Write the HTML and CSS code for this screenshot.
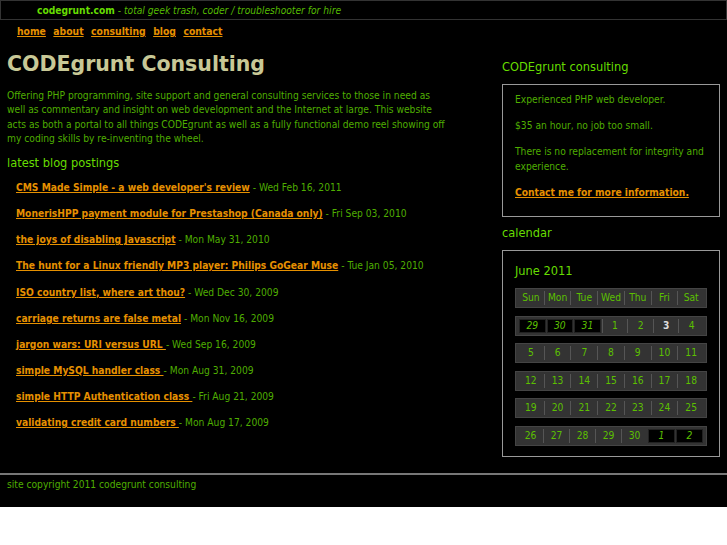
FILE: index.html
```html
<!DOCTYPE html>
<html>
<head>
<meta charset="utf-8">
<link rel="stylesheet" href="styles.css">
</head>
<body>
<div class="page">
  <div class="topbar"><span class="site">codegrunt.com</span> - <em>total geek trash, coder / troubleshooter for hire</em></div>
  <nav class="nav">
    <a href="#">home</a>
    <a href="#">about</a>
    <a href="#">consulting</a>
    <a href="#">blog</a>
    <a href="#">contact</a>
  </nav>
  <div class="main">
    <div class="content">
      <h1 class="title">CODEgrunt Consulting</h1>
      <p class="intro">Offering PHP programming, site support and general consulting services to those in need as well as commentary and insight on web development and the Internet at large. This website acts as both a portal to all things CODEgrunt as well as a fully functional demo reel showing off my coding skills by re-inventing the wheel.</p>
      <h2 class="section">latest blog postings</h2>
      <ul class="posts">
        <li><a href="#">CMS Made Simple - a web developer's review</a> - Wed Feb 16, 2011</li>
        <li><a href="#">MonerisHPP payment module for Prestashop (Canada only)</a> - Fri Sep 03, 2010</li>
        <li><a href="#">the joys of disabling Javascript</a> - Mon May 31, 2010</li>
        <li><a href="#">The hunt for a Linux friendly MP3 player: Philips GoGear Muse</a> - Tue Jan 05, 2010</li>
        <li><a href="#">ISO country list, where art thou?</a> - Wed Dec 30, 2009</li>
        <li><a href="#">carriage returns are false metal</a> - Mon Nov 16, 2009</li>
        <li><a href="#">jargon wars: URI versus URL </a> - Wed Sep 16, 2009</li>
        <li><a href="#">simple MySQL handler class </a> - Mon Aug 31, 2009</li>
        <li><a href="#">simple HTTP Authentication class </a> - Fri Aug 21, 2009</li>
        <li><a href="#">validating credit card numbers </a> - Mon Aug 17, 2009</li>
      </ul>
    </div>
    <div class="sidebar">
      <h2 class="section side-head">CODEgrunt consulting</h2>
      <div class="box info">
        <p>Experienced PHP web developer.</p>
        <p>$35 an hour, no job too small.</p>
        <p>There is no replacement for integrity and experience.</p>
        <p><a href="#">Contact me for more information.</a></p>
      </div>
      <h2 class="section side-head cal-head">calendar</h2>
      <div class="box cal">
        <div class="month">June 2011</div>
        <div class="week head"><span>Sun</span><span>Mon</span><span>Tue</span><span>Wed</span><span>Thu</span><span>Fri</span><span>Sat</span></div>
        <div class="week"><span class="other">29</span><span class="other">30</span><span class="other">31</span><span>1</span><span>2</span><span class="today">3</span><span>4</span></div>
        <div class="week"><span>5</span><span>6</span><span>7</span><span>8</span><span>9</span><span>10</span><span>11</span></div>
        <div class="week"><span>12</span><span>13</span><span>14</span><span>15</span><span>16</span><span>17</span><span>18</span></div>
        <div class="week"><span>19</span><span>20</span><span>21</span><span>22</span><span>23</span><span>24</span><span>25</span></div>
        <div class="week"><span>26</span><span>27</span><span>28</span><span>29</span><span>30</span><span class="other">1</span><span class="other">2</span></div>
      </div>
    </div>
  </div>
  <div class="footer">site copyright 2011 codegrunt consulting</div>
</div>
</body>
</html>
```
FILE: styles.css
```css
html { background: #fff; }
body {
  margin: 0;
  background: #000;
  font-family: "DejaVu Sans Condensed", "DejaVu Sans", sans-serif;
  font-stretch: condensed;
  color: #4fae00;
  font-size: 10.2px;
}
.page { background: #000; padding-bottom: 15px; }
.topbar {
  height: 18px;
  border: 1px solid #333;
  line-height: 20px;
  padding-left: 36px;
  color: #55bb00;
}
.topbar .site { color: #66dd00; font-weight: bold; }
.topbar em { font-style: italic; }
.nav {
  padding: 5px 0 0 17px;
  font-size: 10.3px;
  height: 18px;
  word-spacing: 4.5px;
}
a {
  color: #e69000;
  font-weight: bold;
  text-decoration: underline;
}
.main {
  display: flex;
  padding: 0 7px;
}
.content { width: 442px; }
.title {
  margin: 9px 0 0;
  font-family: "DejaVu Sans", sans-serif;
  font-stretch: normal;
  font-size: 20.5px;
  color: #c8c896;
  font-weight: bold;
  line-height: 24px;
}
.intro {
  margin: 13px 0 0;
  line-height: 14.3px;
}
.section {
  font-size: 12.7px;
  font-weight: normal;
  color: #66dd00;
  margin: 9px 0 0;
  line-height: 16px;
}
.posts {
  list-style: none;
  margin: 10px 0 0;
  padding: 0 0 0 9px;
}
.posts li {
  line-height: 14px;
  margin-bottom: 12.1px;
}
.sidebar {
  margin-left: auto;
  width: 218px;
  padding-top: 16px;
}
.side-head { margin: 0; }
.box {
  border: 1px solid #999;
  margin-top: 9px;
  padding: 8px 12px 16px;
}
.info p { margin: 0 0 11.5px; line-height: 14.5px; }
.info p:last-child { margin-bottom: 0; }
.cal-head { margin-top: 8px; }
.cal { padding: 12px 12px 10px; }
.month {
  color: #66dd00;
  font-size: 12.7px;
  line-height: 16px;
  margin-bottom: 9px;
}
.week {
  display: flex;
  box-sizing: border-box;
  height: 20px;
  background: #333;
  border: 1px solid #444;
  padding: 2px;
  margin-bottom: 7.6px;
  color: #5cc000;
}
.week:last-child { margin-bottom: 0; }
.week span {
  flex: 1;
  text-align: center;
  line-height: 14px;
  border-left: 1px solid #555;
}
.week span:first-child { border-left: none; }
.week span.other {
  background: #000;
  border: 1px solid #222;
  font-style: italic;
  line-height: 12px;
  margin: 0 1px;
}
.week span.other + span.other { margin-left: 0; }
.week span.today { color: #ddd; font-weight: bold; }
.footer {
  margin-top: 16px;
  border-top: 2px solid #777;
  padding: 3px 7px 0;
  line-height: 14px;
}
```
